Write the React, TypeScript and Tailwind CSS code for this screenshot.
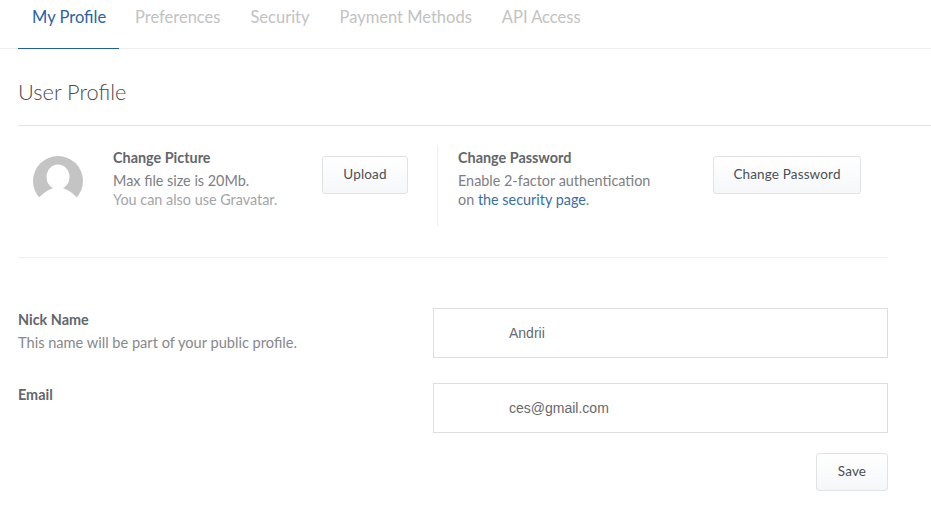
import React from 'react';

const tabs = ['Preferences', 'Security', 'Payment Methods', 'API Access'];

function Avatar() {
  return (
    <svg width="50" height="50" viewBox="0 0 50 50" className="mt-[10px] shrink-0">
      <circle cx="25" cy="25" r="25" fill="#c4c4c4" />
      <ellipse cx="25" cy="21" rx="11.5" ry="12.5" fill="#fff" />
      <path d="M2 52 L2 47 C8 38 16 32 25 31 C34 32 42 38 48 47 L48 52 Z" fill="#fff" />
    </svg>
  );
}

function Button({ label, width, className = '' }: { label: string; width: string; className?: string }) {
  return (
    <button className={`${width} ${className} h-[38px] shrink-0 rounded-[3px] border border-[#dfe3e6] bg-gradient-to-b from-white to-[#f5f7f9] pb-[2px] text-[13.5px] tracking-[0.15px] text-[#4a4f55]`}>
      {label}
    </button>
  );
}

function Field({ label, hint, value, className }: { label: string; hint?: string; value: string; className: string }) {
  return (
    <div className={`flex ${className}`}>
      <div className="w-[415px] pt-[3px]">
        <div className="text-[14.4px] leading-[18px] font-bold text-[#62666b]">{label}</div>
        {hint && <div className="mt-[5px] text-[14.6px] leading-[18px] text-[#85888c]">{hint}</div>}
      </div>
      <div className="flex h-[50px] w-[455px] items-center border border-[#dedede] pl-[75px] font-['Liberation_Sans',sans-serif] text-[14px] text-[#66696d]">
        {value}
      </div>
    </div>
  );
}

export default function App() {
  return (
    <div className="h-[527px] w-[931px] overflow-hidden bg-white font-['Lato',sans-serif]">
      <div className="flex h-[49px] items-start gap-[30px] border-b border-[#eeeeee] pl-[18px] text-[16.5px] leading-[34px] text-[#c2c2c2]">
        <div className="-mr-[14px] h-[49px] w-[101px] border-b border-[#1f5f9f] pl-[14px] text-[#2a62a3]">My Profile</div>
        {tabs.map((tab) => (
          <div key={tab}>{tab}</div>
        ))}
      </div>

      <div className="ml-[18px] flex h-[77px] items-center border-b border-[#e3e3e3] pt-[10px] text-[21.8px] font-light text-[#4a4a4a]">
        User Profile
      </div>

      <div className="ml-[18px] w-[870px]">
        <div className="flex h-[132px] items-start border-b border-[#eeeeee] pt-[20px]">
          <div className="flex h-[80px] w-[420px] shrink-0 items-start border-r border-[#eeeeee] pl-[15px]">
            <Avatar />
            <div className="mt-[2px] ml-[30px] w-[209px] text-[14.4px] leading-[19.5px] text-[#7d8084]">
              <div className="mb-[3px] font-bold text-[#62666b]">Change Picture</div>
              <div>Max file size is 20Mb.</div>
              <div className="text-[#a3a5a8]">You can also use Gravatar.</div>
            </div>
            <Button label="Upload" width="w-[86px]" className="mt-[10px]" />
          </div>
          <div className="flex items-start pl-[20px]">
            <div className="mt-[2px] w-[255px] text-[14.4px] leading-[19.5px] text-[#7d8084]">
              <div className="mb-[3px] font-bold text-[#62666b]">Change Password</div>
              <div>Enable 2-factor authentication</div>
              <div>
                on <span className="text-[#3a6ea5]">the security page</span>.
              </div>
            </div>
            <Button label="Change Password" width="w-[148px]" className="mt-[10px]" />
          </div>
        </div>

        <Field label="Nick Name" hint="This name will be part of your public profile." value="Andrii" className="mt-[50px]" />
        <Field label="Email" value="ces@gmail.com" className="mt-[25px]" />

        <div className="mt-[20px] flex justify-end">
          <Button label="Save" width="w-[72px]" />
        </div>
      </div>
    </div>
  );
}
